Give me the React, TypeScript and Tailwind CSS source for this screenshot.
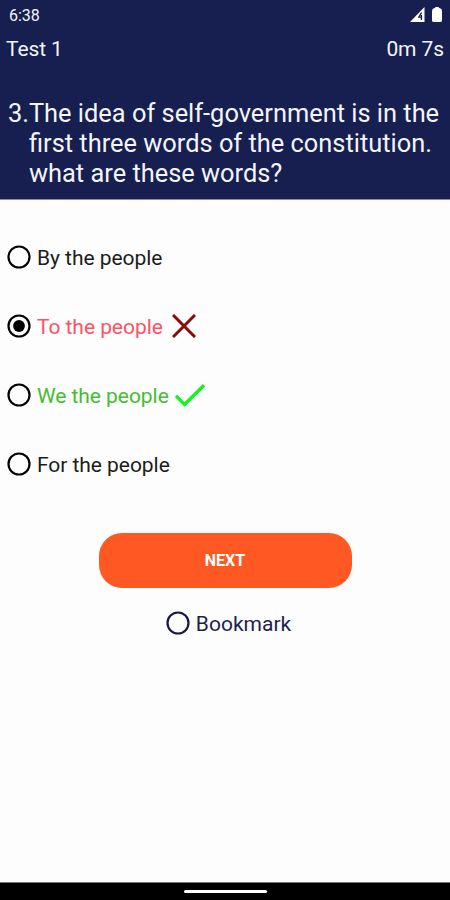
import React, { useState } from 'react';

type Status = 'correct' | 'wrong';

interface Option {
  label: string;
  status?: Status;
}

const options: Option[] = [
  { label: 'By the people' },
  { label: 'To the people', status: 'wrong' },
  { label: 'We the people', status: 'correct' },
  { label: 'For the people' },
];

const labelColors: Record<Status, string> = {
  wrong: 'text-[#fb5363]',
  correct: 'text-[#45bd30]',
};

const SignalIcon: React.FC = () => (
  <svg width="15" height="15" viewBox="0 0 15 15" aria-hidden="true">
    <path d="M0 15 14.5 0v15Z" fill="#fff" />
    <path d="M11.6 5.6 8.8 10.2h3.4M11.4 8v5" fill="none" stroke="#161f4f" strokeWidth="1.3" />
  </svg>
);

const BatteryIcon: React.FC = () => (
  <svg width="10" height="15" viewBox="0 0 10 15" aria-hidden="true">
    <path d="M3.2 0h3.6v1h.7Q10 1.6 10 4v9.6q0 1.4-1.4 1.4H1.4Q0 15 0 13.6V4q0-2.4 2.5-3h.7Z" fill="#fff" />
  </svg>
);

const CrossIcon: React.FC = () => (
  <svg width="24" height="24" viewBox="0 0 24 24" aria-hidden="true">
    <path d="m1 1 22 22M23 1 1 23" stroke="#8b0a0a" strokeWidth="3" />
  </svg>
);

const CheckIcon: React.FC = () => (
  <svg width="30" height="23" viewBox="0 0 30 23" className="mt-[2px] -ml-[3px]" aria-hidden="true">
    <path d="m1 11.8 8.6 8.7L29 1.2" fill="none" stroke="#0af51a" strokeWidth="3.2" />
  </svg>
);

const Radio: React.FC<{ checked: boolean; color: string }> = ({ checked, color }) => (
  <svg width="24" height="24" viewBox="0 0 24 24" className={`shrink-0 ${color}`} aria-hidden="true">
    <circle cx="12" cy="12" r="10.5" fill="none" stroke="currentColor" strokeWidth="2.2" />
    {checked && <circle cx="12" cy="12" r="5.9" fill="currentColor" />}
  </svg>
);

const App: React.FC = () => {
  const [selected, setSelected] = useState(1);
  const [bookmarked, setBookmarked] = useState(false);

  return (
    <div className="flex h-[900px] w-[450px] flex-col overflow-hidden bg-[#fdfdfd] font-[Roboto,sans-serif]">
      <header className="h-[200px] shrink-0 border-b border-[#8b8fac] bg-[#161f4f] text-[#f4f5fb]">
        <div className="flex h-[30px] items-center justify-between pr-2 pl-[9px] text-[16px]">
          <span className="pt-[2px]">6:38</span>
          <div className="flex items-center gap-[7px] self-start pt-[7px]">
            <SignalIcon />
            <BatteryIcon />
          </div>
        </div>
        <div className="flex h-[38px] items-center justify-between px-[6px] pt-[2px] text-[21px] tracking-[-0.1px]">
          <h1>Test 1</h1>
          <span>0m 7s</span>
        </div>
        <div className="flex pt-[30px] pl-2 text-[25.4px] leading-[30px] whitespace-nowrap">
          <span>3.</span>
          <p>
            The idea of self-government is in the
            <br />
            first three words of the constitution.
            <br />
            what are these words?
          </p>
        </div>
      </header>

      <main className="flex flex-1 flex-col items-center">
        <div className="flex w-full flex-col pt-[23px] pl-[7px]">
          {options.map((option, index) => (
            <button
              key={option.label}
              onClick={() => setSelected(index)}
              className="flex h-[68.8px] items-center text-[21px] tracking-[-0.05px]"
            >
              <Radio checked={selected === index} color="text-black" />
              <span className={`mr-[9px] ml-[6px] pt-[3px] ${option.status ? labelColors[option.status] : 'text-[#1c1c1c]'}`}>
                {option.label}
              </span>
              {option.status === 'wrong' && <CrossIcon />}
              {option.status === 'correct' && <CheckIcon />}
            </button>
          ))}
        </div>

        <button className="mt-[34.5px] h-[55px] w-[253px] rounded-[23px] bg-[#ff5823] pt-[2px] text-[16px] font-bold text-white">
          NEXT
        </button>

        <button
          onClick={() => setBookmarked(!bookmarked)}
          className="mt-[19px] flex items-center pl-[7px] text-[21px] text-[#1f1f4a]"
        >
          <Radio checked={bookmarked} color="text-[#17174a]" />
          <span className="ml-[6px] pt-[2px]">Bookmark</span>
        </button>
      </main>

      <footer className="flex h-[18px] shrink-0 items-center justify-center border-t border-[#777] bg-black">
        <div className="h-[3px] w-[83px] rounded-full bg-white" />
      </footer>
    </div>
  );
};

export default App;
